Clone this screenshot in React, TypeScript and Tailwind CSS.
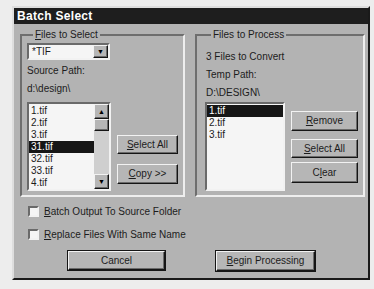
const FONT = { fontFamily: '"Liberation Sans", Arial, sans-serif' }

const LEFT_FILES = ['1.tif', '2.tif', '3.tif', '31.tif', '32.tif', '33.tif', '4.tif']
const RIGHT_FILES = ['1.tif', '2.tif', '3.tif']

const raised =
  'bg-[#b6b6b6] border border-t-[#f2f2f2] border-l-[#f2f2f2] border-r-[#151515] border-b-[#151515] shadow-[inset_-1px_-1px_0_#6a6a6a]'
const sunken =
  'border-2 border-t-[#6a6a6a] border-l-[#6a6a6a] border-r-[#f2f2f2] border-b-[#f2f2f2]'

function Btn({ children, className }: { children: React.ReactNode; className: string }) {
  return (
    <button className={`${raised} flex items-center justify-center text-[10px] text-[#1c1c1c] leading-none ${className}`}>
      {children}
    </button>
  )
}

function ListBox({ items, selected, className, scroll }: { items: string[]; selected: number; className: string; scroll?: boolean }) {
  return (
    <div className={`${sunken} bg-[#f5f5f5] flex ${className}`}>
      <div className="flex-1 flex flex-col pt-[1px]">
        {items.map((f, i) => (
          <div
            key={f}
            className={`h-[12px] leading-[12px] text-[10px] pl-[2px] ${i === selected ? 'bg-[#161616] text-white' : 'text-[#1c1c1c]'}`}
          >
            {f}
          </div>
        ))}
      </div>
      {scroll && (
        <div className="w-[15px] flex flex-col bg-[#d4d4d4]">
          <div className={`${raised} h-[15px] flex items-center justify-center text-[7px] leading-none`}>▲</div>
          <div className={`${raised} h-[12px]`} />
          <div className="flex-1 bg-[#cfcfcf]" />
          <div className={`${raised} h-[15px] flex items-center justify-center text-[7px] leading-none`}>▼</div>
        </div>
      )}
    </div>
  )
}

function Check({ children }: { children: React.ReactNode }) {
  return (
    <div className="flex items-center h-[11px]">
      <div className={`${sunken} w-[11px] h-[11px] bg-[#f5f5f5]`} />
      <span className="ml-[5px] text-[10px] text-[#1c1c1c] leading-none">{children}</span>
    </div>
  )
}

export default function App() {
  return (
    <div className="w-[374px] h-[289px] bg-[#ededed] pt-[6px] pl-[12px]" style={FONT}>
      <div className="w-[358px] h-[274px] bg-[#b3b3b3] border-2 border-t-[#dedede] border-l-[#dedede] border-r-[#1a1a1a] border-b-[#1a1a1a] flex flex-col">
        <div className="h-[16px] bg-[#1e1e1e] text-white font-bold text-[12px] leading-[16px] pl-[3px] tracking-[0.3px]">
          Batch Select
        </div>

        <div className="flex gap-[10px] pl-[6px] mt-[5px]">
          <fieldset className="w-[162px] h-[168px] border-2 border-t-[#6e6e6e] border-l-[#6e6e6e] border-r-[#eeeeee] border-b-[#eeeeee] px-[5px]">
            <legend className="text-[10px] text-[#1c1c1c] px-[2px] ml-[6px] leading-[12px]">
              <u>F</u>iles to Select
            </legend>
            <div className={`${sunken} bg-[#f5f5f5] w-[83px] h-[17px] mt-[2px] flex`}>
              <span className="flex-1 text-[10px] leading-[13px] pl-[3px] text-[#1c1c1c]">*TIF</span>
              <div className={`${raised} w-[15px] flex items-center justify-center text-[7px] leading-none`}>▼</div>
            </div>
            <div className="text-[10px] text-[#1c1c1c] leading-[12px] mt-[5px]">Source Path:</div>
            <div className="text-[10px] text-[#1c1c1c] leading-[12px] mt-[6px]">d:\design\</div>
            <div className="flex mt-[7px]">
              <ListBox items={LEFT_FILES} selected={3} scroll className="w-[84px] h-[89px]" />
              <div className="flex flex-col justify-end gap-[10px] ml-[6px] pb-[7px]">
                <Btn className="w-[61px] h-[19px]"><span><u>S</u>elect All</span></Btn>
                <Btn className="w-[61px] h-[20px]"><span><u>C</u>opy &gt;&gt;</span></Btn>
              </div>
            </div>
          </fieldset>

          <fieldset className="w-[170px] h-[168px] border-2 border-t-[#6e6e6e] border-l-[#6e6e6e] border-r-[#eeeeee] border-b-[#eeeeee] pl-[8px]">
            <legend className="text-[10px] text-[#1c1c1c] px-[2px] ml-[6px] leading-[12px]">
              Files to Process
            </legend>
            <div className="text-[10px] text-[#1c1c1c] leading-[12px] mt-[10px] pl-[1px]">3 Files to Convert</div>
            <div className="text-[10px] text-[#1c1c1c] leading-[12px] mt-[6px] pl-[1px]">Temp Path:</div>
            <div className="text-[10px] text-[#1c1c1c] leading-[12px] mt-[6px] pl-[1px]">D:\DESIGN\</div>
            <div className="flex mt-[3px]">
              <ListBox items={RIGHT_FILES} selected={0} className="w-[80px] h-[89px]" />
              <div className="flex flex-col ml-[6px] pt-[9px]">
                <Btn className="w-[67px] h-[20px]"><span><u>R</u>emove</span></Btn>
                <Btn className="w-[67px] h-[19px] mt-[8px]"><span><u>S</u>elect All</span></Btn>
                <Btn className="w-[67px] h-[21px] mt-[4px]"><span>C<u>l</u>ear</span></Btn>
              </div>
            </div>
          </fieldset>
        </div>

        <div className="flex flex-col gap-[12px] pl-[14px] mt-[9px]">
          <Check><u>B</u>atch Output To Source Folder</Check>
          <Check><u>R</u>eplace Files With Same Name</Check>
        </div>

        <div className="flex pl-[54px] mt-[11px] gap-[51px]">
          <Btn className="w-[97px] h-[19px] outline outline-1 outline-[#151515]">Cancel</Btn>
          <Btn className="w-[99px] h-[20px] outline outline-1 outline-[#151515]"><span><u>B</u>egin Processing</span></Btn>
        </div>
      </div>
    </div>
  )
}
